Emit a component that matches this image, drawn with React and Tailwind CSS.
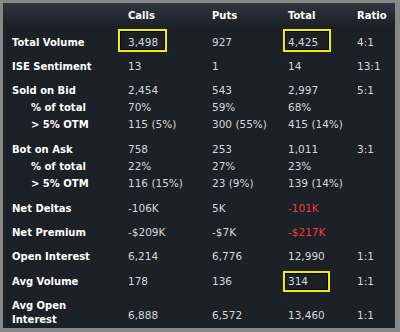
const FONT = { fontFamily: '"DejaVu Sans", Verdana, sans-serif' }

const ROWS = [
  { label: 'Total Volume', vals: ['3,498', '927', '4,425', '4:1'], mt: 'mt-[7px]', boxes: { 0: 'top-[-5px] left-[-10px] w-[49px] h-[23px]', 2: 'top-[-5px] left-[-5px] w-[48px] h-[23px]' } },
  { label: 'ISE Sentiment', vals: ['13', '1', '14', '13:1'], mt: 'mt-[7px]' },
  { label: 'Sold on Bid', vals: ['2,454', '543', '2,997', '5:1'], mt: 'mt-[7px]' },
  { label: '% of total', sub: true, vals: ['70%', '59%', '68%', ''] },
  { label: '> 5% OTM', sub: true, vals: ['115 (5%)', '300 (55%)', '415 (14%)', ''] },
  { label: 'Bot on Ask', vals: ['758', '253', '1,011', '3:1'], mt: 'mt-[8px]' },
  { label: '% of total', sub: true, vals: ['22%', '27%', '23%', ''] },
  { label: '> 5% OTM', sub: true, vals: ['116 (15%)', '23 (9%)', '139 (14%)', ''] },
  { label: 'Net Deltas', vals: ['-106K', '5K', '-101K', ''], red: true, mt: 'mt-[8px]' },
  { label: 'Net Premium', vals: ['-$209K', '-$7K', '-$217K', ''], red: true, mt: 'mt-[7px]' },
  { label: 'Open Interest', vals: ['6,214', '6,776', '12,990', '1:1'], mt: 'mt-[7px]' },
  { label: 'Avg Volume', vals: ['178', '136', '314', '1:1'], mt: 'mt-[8px]', boxes: { 2: 'top-[-2px] left-[-5px] w-[47px] h-[21px]' } },
]

const GRID = 'grid grid-cols-[116px_84px_76px_69px_1fr] pl-[9px]'

function Cell({ value, red, box }) {
  return (
    <div className="relative flex items-center">
      <span className={red ? 'text-[#f03c3c]' : 'text-[#d6d8da]'}>{value}</span>
      {box && (
        <div className={`absolute border-2 border-[#f2ee00] shadow-[inset_0_0_0_1px_#000] ${box}`} />
      )}
    </div>
  )
}

function Row({ row }) {
  return (
    <div className={`${GRID} h-[17px] text-[10.5px] ${row.mt || ''}`}>
      <div className={`flex items-center font-bold text-white text-[10px] ${row.sub ? 'pl-[19px]' : ''}`}>
        {row.label}
      </div>
      {row.vals.map((v, i) => (
        <Cell key={i} value={v} red={row.red && i === 2} box={row.boxes?.[i]} />
      ))}
    </div>
  )
}

export default function App() {
  return (
    <div
      className="w-[400px] h-[332px] border-t-[3px] border-l-[3px] border-r-[5px] border-b-[4px] border-[#878787] bg-[#1c2027] overflow-hidden"
      style={FONT}
    >
      <div className={`${GRID} h-[24px] bg-linear-to-b from-[#30363f] to-[#1c2027] font-bold text-white text-[10px] items-center`}>
        <div />
        <div>Calls</div>
        <div>Puts</div>
        <div>Total</div>
        <div>Ratio</div>
      </div>

      {ROWS.map((row, i) => (
        <Row key={i} row={row} />
      ))}

      <div className={`${GRID} mt-[9px] text-[10.5px]`}>
        <div className="font-bold text-white text-[10px] leading-[14px]">
          Avg Open
          <br />
          Interest
        </div>
        <div className="contents [&>div]:pt-[5px]">
          <Cell value="6,888" />
          <Cell value="6,572" />
          <Cell value="13,460" />
          <Cell value="1:1" />
        </div>
      </div>
    </div>
  )
}
